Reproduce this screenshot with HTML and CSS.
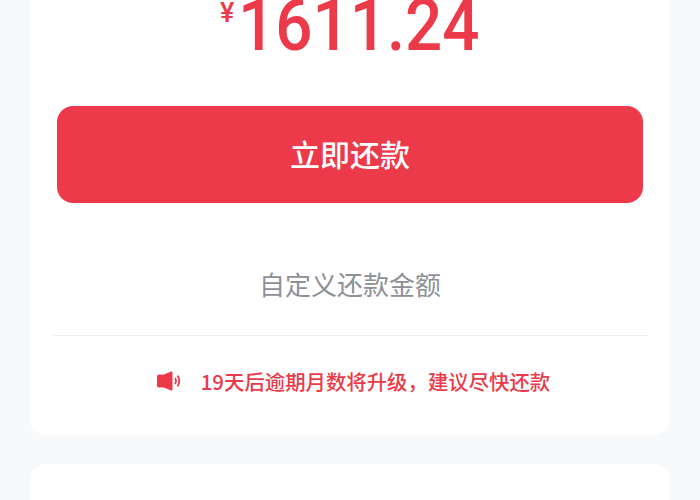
FILE: index.html
```html
<!DOCTYPE html>
<html lang="zh">
<head>
<meta charset="utf-8">
<title>还款</title>
<link rel="stylesheet" href="styles.css">
</head>
<body>
<main class="page">
  <section class="card main-card">
    <div class="amount"><span class="currency">¥</span><span class="value">1611.24</span></div>
    <button class="pay">立即还款</button>
    <div class="custom">自定义还款金额</div>
    <div class="notice">
      <svg class="horn" viewBox="0 0 24 20" width="24" height="20"><path d="M2 3.500h5L13.500.800q2-.8 2 1v16.400q0 1.800-2 1L7 16.500H2q-2 0-2-2v-9q0-2 2-2z" fill="#ec3a4a"/><path d="M18 7q2 3 0 6M20.500 4.500q3.500 5.500 0 11" fill="none" stroke="#ec3a4a" stroke-width="1.800"/></svg>
      <span>19天后逾期月数将升级，建议尽快还款</span>
    </div>
  </section>
  <section class="card next-card"></section>
</main>
</body>
</html>
```
FILE: styles.css
```css
* { box-sizing: border-box; }
html, body { margin: 0; height: 500px; overflow: hidden; }
body { background: #f8f9fb; font-family: "Noto Sans CJK SC", "Liberation Sans", sans-serif; }
.page { display: flex; flex-direction: column; gap: 29px; padding: 0 30px; margin-top: -20px; }
.card { background: #fff; border-radius: 16px; }
.main-card { height: 455px; padding: 0 27px; display: flex; flex-direction: column; }
.next-card { height: 60px; }
.amount { height: 106px; padding-top: 20px; display: flex; justify-content: center; align-items: flex-start; gap: 4px; color: #ec3a4a; }
.currency { font-family: "Roboto", sans-serif; font-weight: 500; font-size: 27px; line-height: 24px; margin-top: 1px; }
.value { font-family: "Roboto", sans-serif; font-weight: 500; font-size: 72px; line-height: 52px; margin: 0 -12px; transform: scaleX(0.91); }
.pay { height: 97px; margin-top: 20px; border: 0; border-radius: 16px; padding: 0 0 3px; background: #ec3a4a; color: #fff; font: 500 30px "Noto Sans CJK SC", sans-serif; }
.custom { margin-top: 59px; text-align: center; font-size: 26px; line-height: 44px; color: #8e9097; }
.notice { margin: 29px -5px 0; border-top: 1px solid #f1f1f3; padding: 29px 0 0 7px; display: flex; justify-content: center; align-items: center; gap: 20px; color: #ec3a4a; font-size: 20.400px; font-weight: 500; line-height: 32px; }
```
